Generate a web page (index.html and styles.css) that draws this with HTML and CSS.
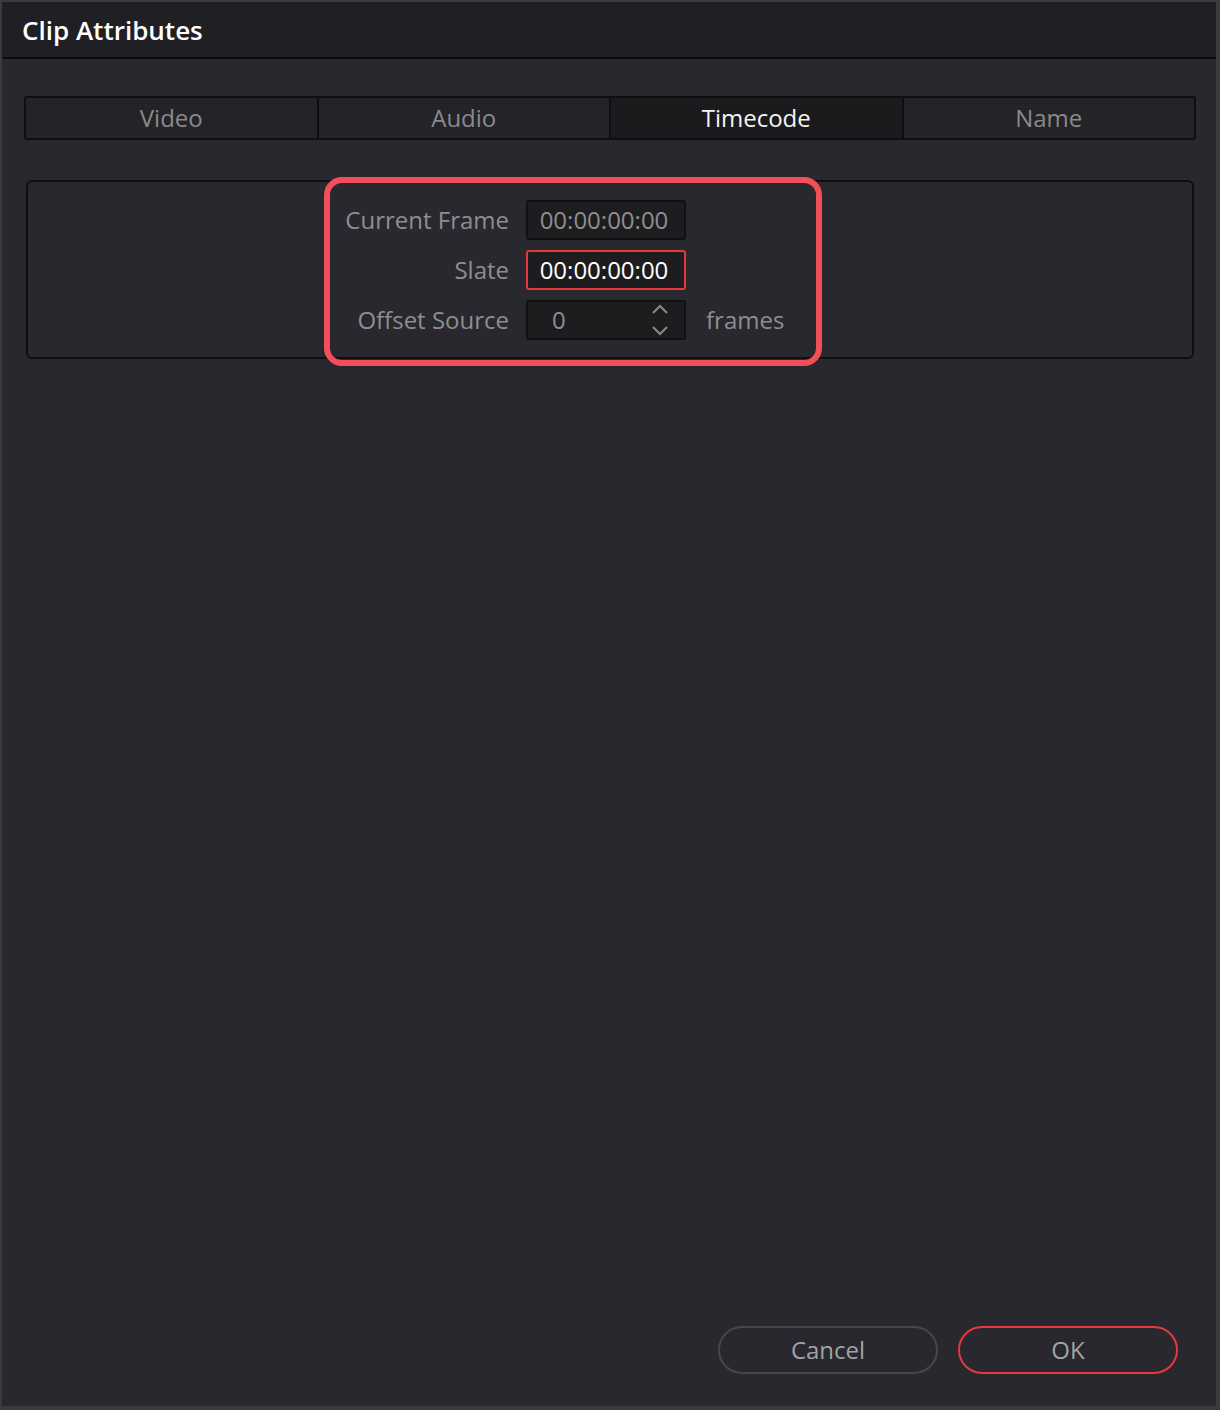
FILE: index.html
```html
<!DOCTYPE html>
<html lang="en">
<head>
    <meta charset="UTF-8">
    <title>Clip Attributes</title>
    <link rel="stylesheet" href="styles.css">
</head>
<body>
    <div class="window">
        <div class="titlebar">Clip Attributes</div>

        <div class="content">
            <div class="tabs">
                <div class="tab">Video</div>
                <div class="tab">Audio</div>
                <div class="tab active">Timecode</div>
                <div class="tab">Name</div>
            </div>

            <div class="panel">
                <div class="form">
                    <label class="label">Current Frame</label>
                    <div class="field readonly">00:00:00:00</div>
                    <span></span>

                    <label class="label">Slate</label>
                    <div class="field focused">00:00:00:00</div>
                    <span></span>

                    <label class="label">Offset Source</label>
                    <div class="field spin">
                        <span class="spin-value">0</span>
                        <svg class="spin-arrows" width="20" height="34" viewBox="0 0 20 34">
                            <path d="M3 10 L10 3 L17 10" />
                            <path d="M3 24 L10 31 L17 24" />
                        </svg>
                    </div>
                    <span class="unit">frames</span>
                </div>
                <div class="highlight"></div>
            </div>

            <div class="footer">
                <button class="btn">Cancel</button>
                <button class="btn primary">OK</button>
            </div>
        </div>
    </div>
</body>
</html>
```

FILE: styles.css
```css
body {
    margin: 0;
    background: #3a3a3c;
    font-family: "Open Sans", "Noto Sans", sans-serif;
}
.window {
    box-sizing: border-box;
    width: 1220px;
    height: 1410px;
    border-style: solid;
    border-color: #3b3b3d;
    border-width: 2px 4px 4px 2px;
    background: #28282e;
    display: flex;
    flex-direction: column;
}
.titlebar {
    height: 55px;
    line-height: 56px;
    padding-left: 20px;
    background: #1f1f24;
    border-bottom: 2px solid #0c0c0e;
    color: #ffffff;
    font-size: 26px;
    font-weight: 600;
}
.content {
    flex: 1;
    display: flex;
    flex-direction: column;
    padding: 37px 20px 0 22px;
}

/* tab strip */
.tabs {
    display: flex;
    height: 44px;
    box-sizing: border-box;
    border: 2px solid #0f0f11;
    border-radius: 3px;
    background: #232328;
}
.tab {
    flex: 1;
    display: flex;
    align-items: center;
    justify-content: center;
    padding-bottom: 2px;
    color: #8a8a8c;
    font-size: 24px;
    border-left: 2px solid #0f0f11;
}
.tab:first-child {
    border-left: none;
}
.tab.active {
    background: #1b1b1e;
    color: #f4f4f4;
}

/* timecode panel */
.panel {
    position: relative;
    margin: 40px 2px 0 2px;
    height: 179px;
    box-sizing: border-box;
    border: 2px solid #0f0f11;
    border-radius: 6px;
    padding: 18px 0 0 281px;
}
.form {
    display: grid;
    grid-template-columns: 200px 160px auto;
    grid-auto-rows: 40px;
    column-gap: 17px;
    row-gap: 10px;
    align-items: center;
}
.label {
    text-align: right;
    color: #8e8e90;
    font-size: 24px;
    padding-bottom: 2px;
}
.field {
    box-sizing: border-box;
    height: 40px;
    border: 2px solid #111113;
    border-radius: 3px;
    background: #1d1d20;
    display: flex;
    align-items: center;
    justify-content: center;
    padding: 0 4px 2px 0;
    font-size: 24px;
    color: #8e8e90;
}
.field.focused {
    border-color: #e3383e;
    color: #ffffff;
}
.field.spin {
    justify-content: space-between;
    padding: 0 14px 0 24px;
}
.spin-value {
    padding-bottom: 2px;
}
.spin-arrows path {
    fill: none;
    stroke: #8a8a8c;
    stroke-width: 2;
}
.unit {
    padding: 0 0 2px 3px;
    color: #8e8e90;
    font-size: 24px;
}
.highlight {
    position: absolute;
    left: 296px;
    top: -5px;
    width: 498px;
    height: 189px;
    box-sizing: border-box;
    border: 6px solid #f44f58;
    border-radius: 18px;
}

/* dialog buttons */
.footer {
    margin-top: auto;
    display: flex;
    justify-content: flex-end;
    gap: 20px;
    padding: 0 18px 32px 0;
}
.btn {
    width: 220px;
    height: 48px;
    border: 2px solid #46474c;
    border-radius: 24px;
    background: transparent;
    color: #a2a2a4;
    font-family: "Open Sans", "Noto Sans", sans-serif;
    font-size: 24px;
    padding-bottom: 2px;
    cursor: pointer;
}
.btn.primary {
    border-color: #e8383e;
}
```
